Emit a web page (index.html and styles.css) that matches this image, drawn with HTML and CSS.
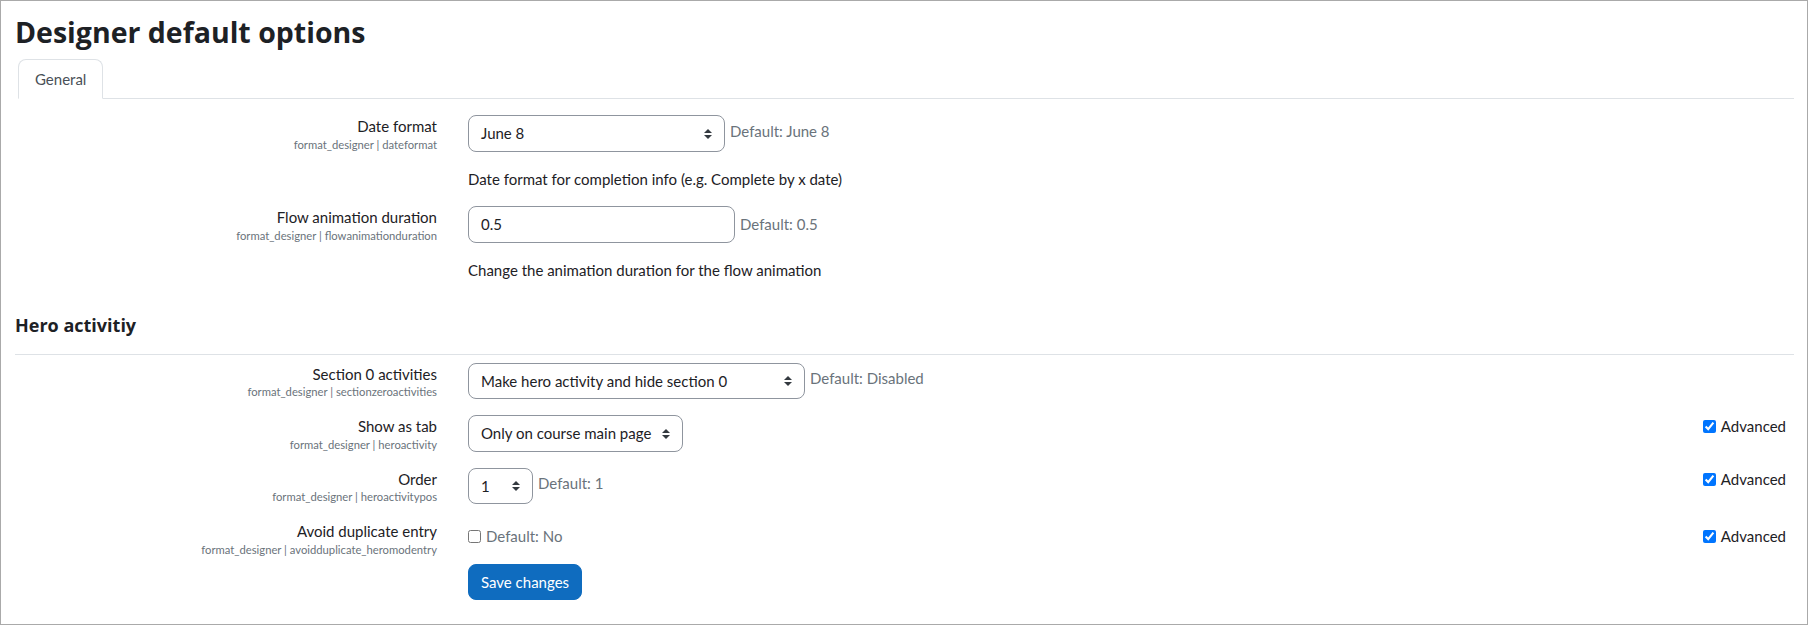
FILE: index.html
```html
<!DOCTYPE html>
<html lang="en">
<head>
<meta charset="utf-8">
<title>Designer default options</title>
<link rel="stylesheet" href="styles.css">
</head>
<body>
<div class="frame">
  <div class="page">
    <h2 class="title">Designer default options</h2>
    <ul class="tabs">
      <li class="tab active">General</li>
    </ul>

    <div class="rows first">
      <div class="row">
        <div class="label"><div class="lbl">Date format</div><div class="short">format_designer | dateformat</div></div>
        <div class="setting">
          <div class="line">
            <div class="select w-date"><span>June 8</span><svg class="caret" width="8" height="10" viewBox="0 0 4 5"><path d="M2 0L0 2h4zm0 5L0 3h4z"/></svg></div>
            <div class="default">Default: June 8</div>
          </div>
          <div class="desc">Date format for completion info (e.g. Complete by x date)</div>
        </div>
      </div>

      <div class="row">
        <div class="label"><div class="lbl">Flow animation duration</div><div class="short">format_designer | flowanimationduration</div></div>
        <div class="setting">
          <div class="line">
            <div class="input w-text">0.5</div>
            <div class="default input-default">Default: 0.5</div>
          </div>
          <div class="desc">Change the animation duration for the flow animation</div>
        </div>
      </div>
    </div>

    <h3 class="section">Hero activitiy</h3>

    <div class="rows">
      <div class="row">
        <div class="label"><div class="lbl">Section 0 activities</div><div class="short">format_designer | sectionzeroactivities</div></div>
        <div class="setting">
          <div class="line">
            <div class="select w-hero"><span>Make hero activity and hide section 0</span><svg class="caret" width="8" height="10" viewBox="0 0 4 5"><path d="M2 0L0 2h4zm0 5L0 3h4z"/></svg></div>
            <div class="default">Default: Disabled</div>
          </div>
        </div>
      </div>

      <div class="row">
        <div class="label"><div class="lbl">Show as tab</div><div class="short">format_designer | heroactivity</div></div>
        <div class="setting">
          <div class="line">
            <div class="select w-tab"><span>Only on course main page</span><svg class="caret" width="8" height="10" viewBox="0 0 4 5"><path d="M2 0L0 2h4zm0 5L0 3h4z"/></svg></div>
            <label class="advanced"><input type="checkbox" checked>Advanced</label>
          </div>
        </div>
      </div>

      <div class="row">
        <div class="label"><div class="lbl">Order</div><div class="short">format_designer | heroactivitypos</div></div>
        <div class="setting">
          <div class="line">
            <div class="select w-order"><span>1</span><svg class="caret" width="8" height="10" viewBox="0 0 4 5"><path d="M2 0L0 2h4zm0 5L0 3h4z"/></svg></div>
            <div class="default">Default: 1</div>
            <label class="advanced"><input type="checkbox" checked>Advanced</label>
          </div>
        </div>
      </div>

      <div class="row last">
        <div class="label"><div class="lbl">Avoid duplicate entry</div><div class="short">format_designer | avoidduplicate_heromodentry</div></div>
        <div class="setting">
          <div class="line check-line">
            <label class="check"><input type="checkbox"><span class="default-inline">Default: No</span></label>
            <label class="advanced"><input type="checkbox" checked>Advanced</label>
          </div>
        </div>
      </div>
    </div>

    <div class="buttons">
      <button class="btn" type="button">Save changes</button>
    </div>
  </div>
</div>
</body>
</html>
```

FILE: styles.css
```css
* { box-sizing: border-box; }
html, body { margin: 0; padding: 0; background: #fff; }
body {
  font-family: Lato, "Noto Sans", sans-serif;
  font-size: 15px;
  line-height: 22.5px;
  color: #1d2125;
}
.frame {
  width: 1808px;
  height: 625px;
  border: 1px solid #aaaaaa;
  overflow: hidden;
}
.page {
  padding: 14.7px 13px 0 14px;
}
.title {
  margin: 0 0 9.7px 0;
  font-family: "Open Sans", Lato, sans-serif;
  font-size: 28.5px;
  line-height: 33.6px;
  font-weight: 700;
}
.tabs {
  list-style: none;
  margin: 0 0 0 3px;
  padding: 0;
  display: flex;
  border-bottom: 1px solid #dee2e6;
}
.tab {
  margin-bottom: -1px;
  padding: 8px 16px;
  border: 1px solid transparent;
  border-top-left-radius: 8px;
  border-top-right-radius: 8px;
  color: #495057;
}
.tab.active {
  border-color: #dee2e6 #dee2e6 #fff;
  background: #fff;
}
.rows.first { margin-top: 16px; }
.row {
  display: grid;
  grid-template-columns: 422px 1fr;
  column-gap: 31px;
  margin-bottom: 16px;
}
.row.last { margin-bottom: 7px; }
.label { text-align: right; }
.lbl { line-height: 22.5px; }
.short {
  font-size: 11.25px;
  line-height: 14px;
  color: #6a737b;
}
.setting { display: flex; flex-direction: column; }
.line {
  display: flex;
  align-items: flex-start;
  gap: 5px;
}
.select, .input {
  display: flex;
  align-items: center;
  height: 36.5px;
  padding: 6px 12px;
  border: 1px solid #8f959e;
  border-radius: 8px;
  background: #fff;
  color: #1d2125;
  white-space: nowrap;
}
.select span { flex: 1; }
.caret { fill: #343a40; flex: none; }
.w-date { width: 257px; }
.w-hero { width: 337px; }
.w-tab { width: 215px; }
.w-order { width: 65px; }
.w-text { width: 267px; }
.default {
  padding-top: 4.5px;
  color: #6a737b;
  white-space: nowrap;
}
.input-default { padding-top: 6.5px; }
.desc { margin-top: 16px; }
.advanced {
  margin-left: auto;
  margin-right: 8px;
  display: flex;
  align-items: center;
  height: 22.5px;
  white-space: nowrap;
}
.advanced input, .check input {
  margin: 0 5px 0 0;
  width: 13px;
  height: 13px;
}
.check-line { padding-top: 4.5px; }
.check {
  display: flex;
  align-items: center;
  height: 22.5px;
}
.default-inline { color: #6a737b; }
.section {
  margin: 32.5px 0 8px 0;
  padding: 0 0 17px 0;
  font-family: "Open Sans", Lato, sans-serif;
  font-size: 18px;
  line-height: 22.8px;
  font-weight: 700;
  border-bottom: 1px solid #dee2e6;
}
.buttons { padding-left: 453px; }
.btn {
  font-family: Lato, "Noto Sans", sans-serif;
  font-size: 15px;
  line-height: 22.5px;
  height: 36.5px;
  padding: 6px 12px;
  color: #fff;
  background: #0f6cbf;
  border: 1px solid #0f6cbf;
  border-radius: 8px;
}
```
